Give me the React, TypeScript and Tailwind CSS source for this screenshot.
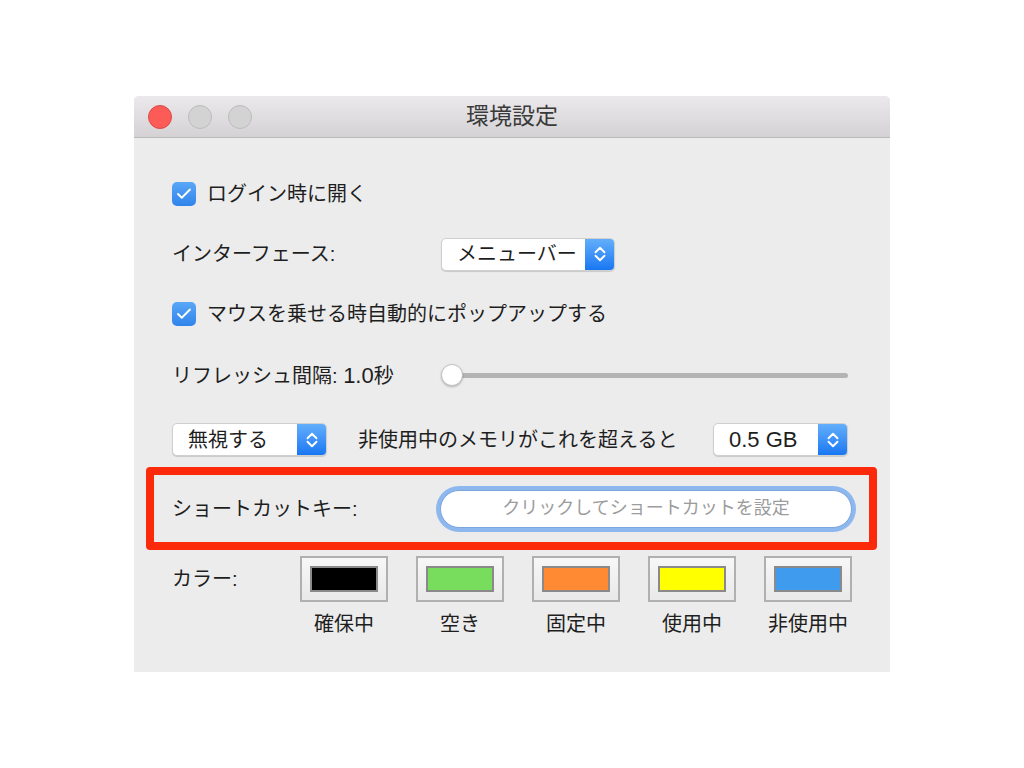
import { Check, ChevronUp, ChevronDown } from "lucide-react"

const font = "font-['Liberation_Sans','Noto_Sans_CJK_JP',sans-serif]"

const swatches = [
  { label: "確保中", color: "bg-[#000000]" },
  { label: "空き", color: "bg-[#78dc5c]" },
  { label: "固定中", color: "bg-[#ff8a33]" },
  { label: "使用中", color: "bg-[#ffff00]" },
  { label: "非使用中", color: "bg-[#3f9bee]" },
]

function CheckBox() {
  return (
    <div className="w-[24px] h-[24px] rounded-[5px] bg-gradient-to-b from-[#5aa7f6] to-[#2f84eb] flex items-center justify-center shrink-0">
      <Check className="w-[18px] h-[18px] text-white" strokeWidth={2.5} />
    </div>
  )
}

function Popup({ value, width }: { value: React.ReactNode; width: string }) {
  return (
    <div
      className={`${width} h-[33px] flex rounded-[5px] bg-white border border-[#cfcfcf] shadow-[0_1px_1px_rgba(0,0,0,0.15)] overflow-hidden`}
    >
      <div className="flex-1 flex items-center pl-[15px] text-[20px] text-[#1e1e1e] leading-none">{value}</div>
      <div className="w-[29px] bg-gradient-to-b from-[#62aefb] to-[#1677f2] flex flex-col items-center justify-center">
        <ChevronUp className="w-[18px] h-[18px] text-white -mb-[5px]" strokeWidth={2.5} />
        <ChevronDown className="w-[18px] h-[18px] text-white -mt-[5px]" strokeWidth={2.5} />
      </div>
    </div>
  )
}

export default function App() {
  return (
    <div className={`min-h-[768px] bg-white pt-[96px] pl-[134px] ${font}`}>
      <div className="w-[756px] h-[576px] bg-[#ececec] rounded-t-[5px] overflow-hidden">
        {/* Title bar */}
        <div className="relative h-[42px] bg-gradient-to-b from-[#ebe9eb] to-[#d4d2d4] border-b border-[#b9b9b9] flex items-center pl-[14px] gap-[16px]">
          <div className="w-[24px] h-[24px] rounded-full bg-[#fc5b57] border border-[#de4a44]" />
          <div className="w-[24px] h-[24px] rounded-full bg-[#d3d3d3] border border-[#bcbcbc]" />
          <div className="w-[24px] h-[24px] rounded-full bg-[#d3d3d3] border border-[#bcbcbc]" />
          <div className="absolute inset-0 flex items-center justify-center text-[23px] text-[#3a3a3a] pointer-events-none">
            環境設定
          </div>
        </div>

        {/* Body */}
        <div className="pt-[26px] text-[#1e1e1e] text-[20px]">
          <div className="pl-[38px] pr-[42px]">
            <div className="h-[60px] flex items-center gap-[11px]">
              <CheckBox />
              <span>ログイン時に開く</span>
            </div>

            <div className="h-[60px] flex items-center">
              <span className="w-[269px]">インターフェース:</span>
              <Popup value="メニューバー" width="w-[174px]" />
            </div>

            <div className="h-[60px] flex items-center gap-[11px]">
              <CheckBox />
              <span>マウスを乗せる時自動的にポップアップする</span>
            </div>

            <div className="h-[62px] flex items-center">
              <span className="w-[269px]">
                リフレッシュ間隔: <span className="text-[22px]">1.0</span>秒
              </span>
              <div className="relative flex-1 h-[22px] flex items-center">
                <div className="ml-[11px] flex-1 h-[5px] rounded-full bg-[#b4b4b4]" />
                <div className="absolute left-0 top-0 w-[22px] h-[22px] rounded-full bg-white border border-[#c4c4c4] shadow-[0_1px_2px_rgba(0,0,0,0.25)]" />
              </div>
            </div>

            <div className="h-[33px] mt-[17px] mb-[11px] flex items-center">
              <Popup value="無視する" width="w-[155px]" />
              <span className="ml-[31px]">非使用中のメモリがこれを超えると</span>
              <div className="ml-auto">
                <Popup value={<span className="text-[22px]">0.5 GB</span>} width="w-[135px]" />
              </div>
            </div>
          </div>

          {/* Highlighted shortcut row */}
          <div className="ml-[12px] w-[731px] h-[83px] border-[8px] border-[#fc2a0b] rounded-[4px] flex items-center pl-[18px] pr-[13px]">
            <span className="w-[264px]">ショートカットキー:</span>
            <div className="flex-1 h-[46px] rounded-full bg-[#8db7ef] p-[4px]">
              <div className="h-full rounded-full bg-white border border-[#7ea6dc] flex items-center justify-center text-[18px] text-[#9c9c9c]">
                クリックしてショートカットを設定
              </div>
            </div>
          </div>

          {/* Colours */}
          <div className="pl-[38px] mt-[6px] flex">
            <span className="w-[128px] h-[46px] flex items-center">カラー:</span>
            <div className="flex gap-[28px]">
              {swatches.map((s) => (
                <div key={s.label} className="w-[88px] flex flex-col items-center">
                  <div className="w-[88px] h-[46px] border-2 border-[#b0b0b0] bg-gradient-to-b from-[#f7f7f7] to-[#e9e9e9] flex items-center justify-center">
                    <div className={`w-[68px] h-[26px] border-2 border-[#8a8a8a] ${s.color}`} />
                  </div>
                  <span className="mt-[9px] leading-[26px] whitespace-nowrap">{s.label}</span>
                </div>
              ))}
            </div>
          </div>
        </div>
      </div>
    </div>
  )
}
